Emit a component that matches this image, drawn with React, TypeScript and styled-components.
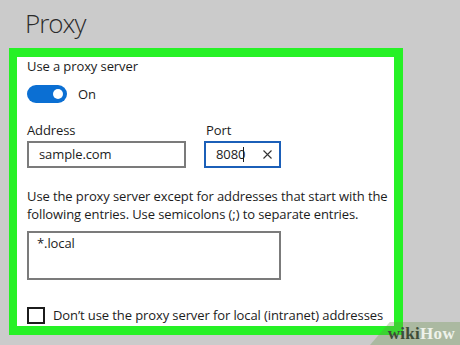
import React from "react";
import styled, { createGlobalStyle } from "styled-components";

const Global = createGlobalStyle`
  html, body { margin: 0; padding: 0; }
  body {
    width: 460px;
    height: 345px;
    overflow: hidden;
    background: #cbcbcb;
    font-family: "Open Sans", "Noto Sans", sans-serif;
    color: #1c1c1c;
  }
`;

const Page = styled.div`
  position: relative;
  width: 460px;
  height: 345px;
  display: flex;
  flex-direction: column;
`;

const Title = styled.h1`
  margin: 0;
  padding: 10px 0 0 25px;
  font-size: 26px;
  line-height: 26px;
  font-weight: 300;
  letter-spacing: -1px;
  color: #2b2b2b;
`;

const Panel = styled.section`
  margin: 12px 0 0 9px;
  width: 394px;
  height: 287px;
  flex-shrink: 0;
  box-sizing: border-box;
  border: 9px solid #26f126;
  border-left-width: 8px;
  background: #fff;
  padding: 0 0 0 10px;
  display: flex;
  flex-direction: column;
  font-size: 13px;
  line-height: 19px;
  letter-spacing: -0.1px;
  & > * { flex-shrink: 0; }
`;

const Label = styled.div`
  margin-top: 0;
`;

const ToggleRow = styled.div`
  margin-top: 9px;
  display: flex;
  align-items: center;
  gap: 11px;
  height: 18px;
`;

const Toggle = styled.div`
  width: 40px;
  height: 18px;
  border-radius: 9px;
  background: #0b6fd3;
  display: flex;
  align-items: center;
  justify-content: flex-end;
  padding-right: 4px;
  box-sizing: border-box;
`;

const Knob = styled.div`
  width: 10px;
  height: 10px;
  border-radius: 50%;
  background: #fff;
`;

const FieldRow = styled.div`
  margin-top: 18px;
  display: flex;
  gap: 18px;
`;

const Field = styled.div<{ $indent?: number }>`
  display: flex;
  flex-direction: column;
  gap: 1px;
  & > span:first-child { padding-left: ${(p) => p.$indent ?? 0}px; }
`;

const Input = styled.div<{ $w: number; $focus?: boolean }>`
  width: ${(p) => p.$w}px;
  height: 27px;
  box-sizing: border-box;
  border: 2px solid ${(p) => (p.$focus ? "#1b5fb8" : "#7b7b7b")};
  display: flex;
  align-items: center;
  padding: 0 7px 0 10px;
`;

const Cursor = styled.span`
  display: inline-block;
  width: 1px;
  height: 15px;
  background: #1c1c1c;
  margin-left: -2px;
  vertical-align: -3px;
`;

const Clear = styled.span`
  margin-left: auto;
  display: flex;
`;

const Para = styled.p`
  margin: 19px 0 0 0;
  line-height: 18px;
  width: 372px;
`;

const TextArea = styled.div`
  margin-top: 8px;
  width: 254px;
  height: 49px;
  box-sizing: border-box;
  border: 2px solid #7b7b7b;
  padding: 1px 8px;
`;

const CheckRow = styled.label`
  margin-top: 26px;
  display: flex;
  align-items: center;
  gap: 8px;
`;

const Box = styled.span`
  width: 18px;
  height: 17px;
  box-sizing: border-box;
  border: 2px solid #1c1c1c;
`;

const Watermark = styled.div`
  position: absolute;
  right: 0;
  bottom: 0;
  width: 90px;
  height: 23px;
  background: rgba(105, 150, 75, 0.32);
  clip-path: polygon(22% 0, 100% 0, 100% 100%, 0 100%);
  display: flex;
  align-items: center;
  justify-content: flex-end;
  padding-right: 5px;
  box-sizing: border-box;
  font-family: "Liberation Serif", "DejaVu Serif", serif;
  font-weight: 700;
  font-size: 17px;
  letter-spacing: 0.3px;
`;

const Wiki = styled.span`
  color: #3d4c37;
`;

const How = styled.span`
  color: #eef2ea;
`;

export default function App() {
  return (
    <Page>
      <Global />
      <Title>Proxy</Title>
      <Panel>
        <Label>Use a proxy server</Label>
        <ToggleRow>
          <Toggle>
            <Knob />
          </Toggle>
          <span>On</span>
        </ToggleRow>
        <FieldRow>
          <Field>
            <span>Address</span>
            <Input $w={159}>sample.com</Input>
          </Field>
          <Field $indent={2}>
            <span>Port</span>
            <Input $w={77} $focus>
              <span>
                8080
                <Cursor />
              </span>
              <Clear>
                <svg width="9" height="9" viewBox="0 0 9 9">
                  <path d="M0.5 0.5 L8.5 8.5 M8.5 0.5 L0.5 8.5" stroke="#333" strokeWidth="1.1" />
                </svg>
              </Clear>
            </Input>
          </Field>
        </FieldRow>
        <Para>
          Use the proxy server except for addresses that start with the following entries. Use
          semicolons (;) to separate entries.
        </Para>
        <TextArea>*.local</TextArea>
        <CheckRow>
          <Box />
          <span>Don’t use the proxy server for local (intranet) addresses</span>
        </CheckRow>
      </Panel>
      <Watermark>
        <Wiki>wiki</Wiki>
        <How>How</How>
      </Watermark>
    </Page>
  );
}
